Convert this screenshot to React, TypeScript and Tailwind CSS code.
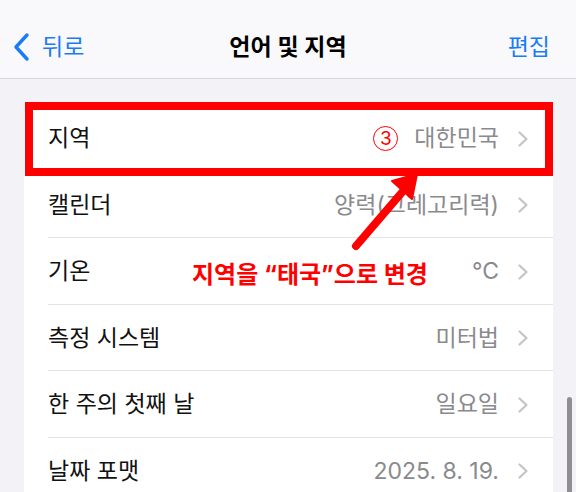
import React from "react";

const rows: { label: string; value: string }[] = [
  { label: "지역", value: "대한민국" },
  { label: "캘린더", value: "양력(그레고리력)" },
  { label: "기온", value: "°C" },
  { label: "측정 시스템", value: "미터법" },
  { label: "한 주의 첫째 날", value: "일요일" },
  { label: "날짜 포맷", value: "2025. 8. 19." },
];

function Chevron() {
  return (
    <svg width="12" height="18" viewBox="0 0 12 18" className="ml-[18px] shrink-0">
      <polyline
        points="2.5,2.5 9.5,9 2.5,15.5"
        fill="none"
        stroke="#c4c4c7"
        strokeWidth="2.2"
        strokeLinecap="round"
        strokeLinejoin="round"
      />
    </svg>
  );
}

export default function App() {
  return (
    <div
      className="relative w-[576px] h-[492px] overflow-hidden bg-[#f2f2f7]"
      style={{ fontFamily: 'Inter, "Noto Sans CJK KR", sans-serif' }}
    >
      {/* Nav bar */}
      <div className="relative h-[79px] bg-[#f9f9fb] border-b border-[#d6d6da] flex items-center pt-[16px] px-[12px]">
        <div className="flex items-center text-[#1a7cf4]">
          <svg width="20" height="30" viewBox="0 0 20 30" className="mr-[10px]">
            <polyline
              points="15,3 4,15 15,27"
              fill="none"
              stroke="#1a7cf4"
              strokeWidth="3.4"
              strokeLinecap="round"
              strokeLinejoin="round"
            />
          </svg>
          <span className="text-[23px] leading-none">뒤로</span>
        </div>
        <div className="absolute left-0 right-0 top-[16px] bottom-0 flex items-center justify-center pointer-events-none">
          <span className="text-[23px] font-semibold text-black leading-none">언어 및 지역</span>
        </div>
        <span className="ml-auto mr-[14px] text-[23px] leading-none text-[#1a7cf4]">편집</span>
      </div>

      {/* Card */}
      <div className="pl-[24px] pr-[23px] pt-[25px]">
        <div className="relative bg-white rounded-t-[10px]">
          {rows.map((r, i) => (
            <div key={r.label} className="relative h-[66.5px] flex items-center pl-[24px] pr-[24px] pt-[3px]">
              {i > 0 && <div className="absolute top-0 left-[24px] right-0 h-px bg-[#e4e4e8]" />}
              <span className="text-[23px] text-[#111] leading-none">{r.label}</span>
              <div className="ml-auto flex items-center">
                {i === 0 && (
                  <div className="mr-[16px] w-[25px] h-[25px] rounded-full border-[1.5px] border-[#ff0000] flex items-center justify-center text-[#ff0000] text-[19px] leading-none">
                    3
                  </div>
                )}
                <span className="text-[23px] text-[#8a8a8e] leading-none">{r.value}</span>
                <Chevron />
              </div>
            </div>
          ))}
          {/* Red highlight box */}
          <div className="absolute left-[1px] right-0 top-[-2px] h-[74px] border-[8px] border-[#ff0000] pointer-events-none" />
        </div>
      </div>

      {/* Arrow */}
      <svg className="absolute left-0 top-0 pointer-events-none" width="576" height="492" viewBox="0 0 576 492">
        <line x1="356" y1="246" x2="404" y2="190" stroke="#ff0000" strokeWidth="8" strokeLinecap="round" />
        <polygon points="392,181 417,174 412,199" fill="#ff0000" stroke="#ff0000" strokeWidth="2" strokeLinejoin="round" />
      </svg>

      {/* Annotation */}
      <div className="absolute left-[192px] top-[263px] text-[#ff0000] font-bold text-[24px] leading-none whitespace-nowrap">
        지역을 “태국”으로 변경
      </div>

      {/* Scrollbar */}
      <div className="absolute left-[567px] top-[397px] w-[5px] h-[110px] rounded-full bg-[#8e8e93]" />
    </div>
  );
}
